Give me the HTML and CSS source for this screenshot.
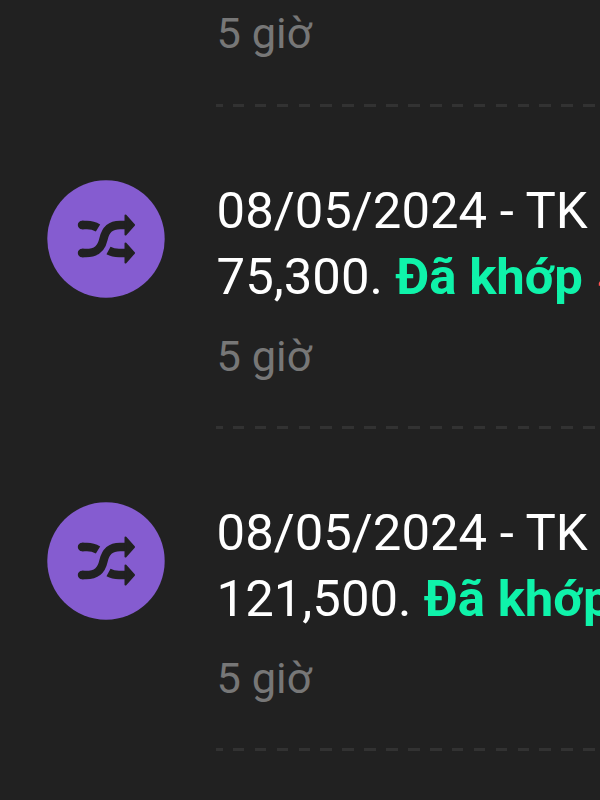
FILE: index.html
```html
<!DOCTYPE html>
<html lang="vi">
<head>
<meta charset="utf-8">
<title>Thông báo</title>
<link rel="stylesheet" href="styles.css">
</head>
<body>
<svg width="0" height="0" class="defs"><defs>
<g id="shuffle" fill="none" stroke="#212121" stroke-width="8.4">
<path d="M35 45H40Q46 45 51 48"/>
<path d="M61.5 70.5Q66 73 72 73H79"/>
<path d="M35 73H39C50 73 54.5 68 56.5 59S63 45 73 45H79"/>
<path d="M35 45H36M35 73H36" stroke-linecap="round"/>
<path d="M78.5 35.5L87 45L78.5 54.5ZM78.5 63.5L87 73L78.5 82.5Z" fill="#212121" stroke-width="2" stroke-linejoin="round"/>
</g></defs></svg>
<main class="list">
<article class="item"><div class="body"><time class="time">5 giờ</time></div></article>
<article class="item">
<svg class="avatar" viewBox="0 0 118 118"><circle cx="59" cy="59" r="58.7" fill="#855cd0"/><use href="#shuffle"/></svg>
<div class="body"><p class="text">08/05/2024 - TK<br>75,300. <b>Đã khớp</b> <i>4</i></p><time class="time">5 giờ</time></div>
</article>
<article class="item">
<svg class="avatar" viewBox="0 0 118 118"><circle cx="59" cy="59" r="58.7" fill="#855cd0"/><use href="#shuffle"/></svg>
<div class="body"><p class="text">08/05/2024 - TK<br>121,500. <b>Đã khớp</b></p><time class="time">5 giờ</time></div>
</article>
</main>
</body>
</html>
```
FILE: styles.css
```css
body { margin: 0; background: #212121; color: #fff; font-family: Roboto, sans-serif; height: 800px; overflow: hidden; }
.defs { display: block; height: 0; }
.list { width: 600px; overflow: hidden; }
.item { display: flex; height: 322px; padding-left: 47px; box-sizing: border-box; }
.item:first-child { height: 107px; padding-left: 216px; }
.avatar { width: 118px; height: 118px; margin: 73px 51px 0 0; flex: none; }
.body { flex: 1; min-width: 0; box-sizing: border-box; padding: 71px 0 0 0.6px; white-space: nowrap; background: repeating-linear-gradient(90deg, #323232 0 11.5px, transparent 11.5px 21.9px) -5px bottom / 400px 3px no-repeat; }
.item:first-child .body { padding-top: 5px; }
.text { margin: 0 0 18px; font-size: 50.85px; line-height: 66px; }
.text b { color: #0ff3aa; font-weight: 700; }
.text i { margin-left: 2px; color: #ff5252; font-style: normal; }
.time { display: block; font-size: 43.4px; line-height: 58px; color: #777; }
```
